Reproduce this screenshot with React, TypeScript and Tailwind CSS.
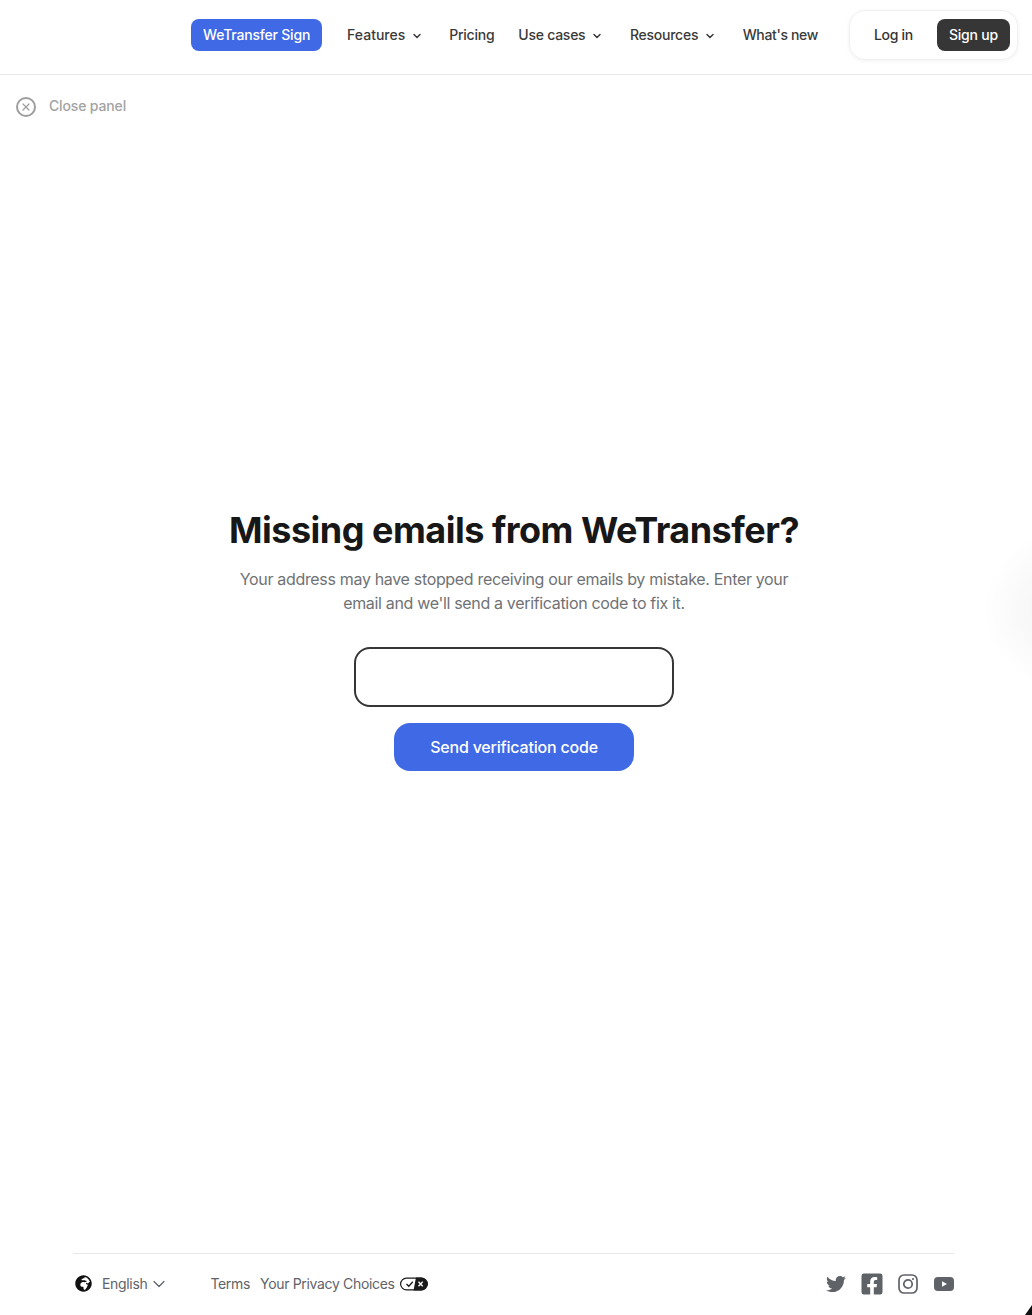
import { ChevronDown, X } from "lucide-react";
import { FaFacebookSquare, FaGlobeAfrica, FaTwitter } from "react-icons/fa";

const navItems = [
  { label: "Features", menu: true, className: "mr-[24px] tracking-[0px]" },
  { label: "Pricing", menu: false, className: "mr-[24px] tracking-[-0.25px]" },
  { label: "Use cases", menu: true, className: "mr-[24.5px] tracking-[-0.25px]" },
  { label: "Resources", menu: true, className: "mr-[24.5px] tracking-[-0.25px]" },
  { label: "What's new", menu: false, className: "mr-[24px] tracking-[-0.35px]" },
];

const PrivacyIcon = () => (
  <svg width="28" height="14" viewBox="0 0 28 14" fill="none">
    <rect x="0.6" y="1.1" width="26.8" height="11.8" rx="5.9" stroke="#1a1a1a" strokeWidth="1.2" fill="#fff" />
    <path d="M16 0.5H21a6.5 6.5 0 0 1 0 13H13.5Z" fill="#1a1a1a" />
    <path d="M6.5 7l2.3 2.3 4-4.6" stroke="#1a1a1a" strokeWidth="1.3" />
    <path d="M18.5 4.8l4.2 4.4M22.7 4.8l-4.2 4.4" stroke="#fff" strokeWidth="1.3" />
  </svg>
);

const InstagramIcon = () => (
  <svg width="20" height="20" viewBox="0 0 20 20" fill="none" stroke="#5f6368">
    <rect x="1" y="1" width="18" height="18" rx="5" strokeWidth="1.7" />
    <circle cx="10" cy="10" r="4.2" strokeWidth="1.7" />
    <circle cx="15" cy="5" r="1.1" fill="#5f6368" stroke="none" />
  </svg>
);

const YoutubeIcon = () => (
  <svg width="20" height="14" viewBox="0 0 20 14">
    <rect width="20" height="14" rx="4" fill="#5f6368" />
    <path d="M8 4.3 13 7l-5 2.7Z" fill="#fff" />
  </svg>
);

const App = () => {
  return (
    <div
      className="relative flex h-screen flex-col overflow-hidden bg-white text-[#333]"
      style={{ fontFamily: "Inter, 'Liberation Sans', sans-serif" }}
    >
      <header className="flex h-[75px] shrink-0 items-center justify-end border-b border-[#e8e8e8] pb-[4px] pr-[14px] leading-[20px]">
        <nav className="flex items-center">
          <a className="mr-[25px] flex h-[32px] w-[131px] items-center justify-center rounded-[8px] bg-[#4069e5] text-[14px] font-medium tracking-[-0.2px] text-white">
            WeTransfer Sign
          </a>
          {navItems.map((item) => (
            <a key={item.label} className={`flex items-center text-[14px] font-medium text-[#3a3a3a] ${item.className}`}>
              {item.label}
              {item.menu && <ChevronDown className="ml-[6px] mr-[2px] mt-[2px] size-[12px]" strokeWidth={3} />}
            </a>
          ))}
        </nav>
        <div className="ml-[7px] flex h-[50px] w-[169px] items-center justify-between rounded-[16px] border border-[#f0f0f0] pl-[24px] pr-[7px] shadow-[0_1px_4px_rgba(0,0,0,0.06)]">
          <a className="text-[14px] font-medium tracking-[-0.3px] text-[#333]">Log in</a>
          <a className="flex h-[32px] w-[73px] items-center justify-center rounded-[8px] bg-[#363636] text-[14px] font-medium tracking-[-0.2px] text-white">
            Sign up
          </a>
        </div>
      </header>

      <div className="flex h-[62px] shrink-0 items-center pl-[16px] pr-4">
        <span className="mt-[1px] flex size-[20px] items-center justify-center rounded-full border-2 border-[#9e9e9e] text-[#9e9e9e]">
          <X className="size-[12px]" strokeWidth={2.5} />
        </span>
        <span className="mb-[1px] ml-[13px] text-[14px] font-medium tracking-[-0.15px] text-[#a3a3a3]">Close panel</span>
      </div>

      <main className="flex flex-1 flex-col items-center justify-center pb-[110px] pr-[4px]">
        <h1 className="text-[36px] leading-[44px] font-[650] tracking-[-0.5px] text-[#171717]">Missing emails from WeTransfer?</h1>
        <p className="mt-[15px] w-[580px] text-center text-[16px] leading-[24px] tracking-[-0.33px] text-[#6f7275]">
          Your address may have stopped receiving our emails by mistake. Enter your email and we'll send a verification code to fix it.
        </p>
        <input className="mt-[32px] h-[60px] w-[320px] rounded-[16px] border-2 border-[#363636] bg-white outline-none" />
        <button className="mt-[16px] flex h-[48px] w-[240px] items-center justify-center rounded-[16px] bg-[#4069e5] text-[16px] font-medium tracking-[-0.2px] text-white">
          Send verification code
        </button>
      </main>

      <footer className="ml-[73px] mr-[78px] mt-[1px] flex h-[62px] shrink-0 items-center border-t border-[#e8e8e8] pb-[2px] text-[14px] tracking-[-0.33px] text-[#5f6368]">
        <FaGlobeAfrica className="ml-[2px] size-[17px] text-[#111]" />
        <span className="ml-[10px]">English</span>
        <ChevronDown className="ml-[2px] size-[20px]" strokeWidth={1.5} />
        <span className="ml-[41px]">Terms</span>
        <span className="ml-[10px]">Your Privacy Choices</span>
        <span className="ml-[5px]">
          <PrivacyIcon />
        </span>
        <div className="ml-auto flex items-center gap-[16px]">
          <FaTwitter className="size-[20px]" />
          <FaFacebookSquare className="-mx-[2px] size-[24px]" />
          <InstagramIcon />
          <YoutubeIcon />
        </div>
      </footer>

      <div className="absolute right-[-110px] top-[530px] size-[160px] rounded-full bg-[radial-gradient(circle,rgba(0,0,0,0.05),rgba(0,0,0,0)_70%)]" />
      <div className="absolute bottom-0 right-0 h-0 w-0 border-b-[10px] border-l-[7px] border-b-[#111] border-l-transparent" />
    </div>
  );
};

export default App;
